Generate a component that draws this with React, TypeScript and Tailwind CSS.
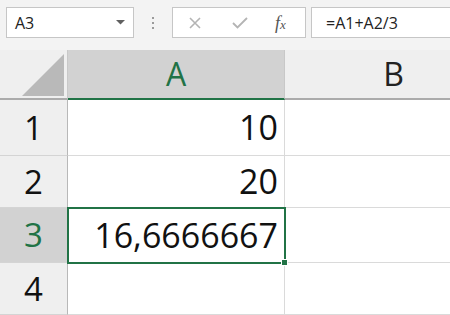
import React from "react"

const font = { fontFamily: '"Open Sans", "Noto Sans", sans-serif' }

const rows = [
    { n: "1", v: "10", h: "h-[56px]" },
    { n: "2", v: "20", h: "h-[52px]" },
    { n: "3", v: "16,6666667", h: "h-[55px]", sel: true },
    { n: "4", v: "", h: "h-[52px]" },
]

const FormulaBar: React.FC = () => {
    return (
        <div className="flex h-[50px] items-start gap-0 bg-[#f3f3f3] pt-[7px] pl-[6px]">
            {/* name box */}
            <div className="flex h-[31px] w-[128px] items-center justify-between border border-[#c6c6c6] bg-white pl-[8px] pr-[8px] text-[16px] text-[#222]">
                <span>A3</span>
                <svg width="9" height="5" viewBox="0 0 9 5">
                    <path d="M0 0 L9 0 L4.5 4.5 Z" fill="#606060" />
                </svg>
            </div>
            <div className="flex h-[31px] w-[38px] flex-col items-center justify-center gap-[3px]">
                <span className="block h-[2px] w-[2px] bg-[#9a9a9a]" />
                <span className="block h-[2px] w-[2px] bg-[#9a9a9a]" />
                <span className="block h-[2px] w-[2px] bg-[#9a9a9a]" />
            </div>
            {/* cancel / enter / fx */}
            <div className="flex h-[31px] w-[134px] items-center border border-[#c6c6c6] bg-white">
                <svg className="ml-[16px]" width="12" height="12" viewBox="0 0 12 12">
                    <path d="M1 1 L11 11 M11 1 L1 11" stroke="#b4b4b4" strokeWidth="1.6" />
                </svg>
                <svg className="ml-[31px]" width="16" height="12" viewBox="0 0 16 12">
                    <path d="M1 6 L5.5 10.5 L15 1" stroke="#b4b4b4" strokeWidth="1.8" fill="none" />
                </svg>
                <span className="ml-[27px] text-[18px] italic leading-none text-[#555]" style={{ fontFamily: '"Liberation Serif", serif' }}>
                    f<span className="text-[13px]">x</span>
                </span>
            </div>
            <div className="ml-[5px] flex h-[31px] flex-1 items-center border border-r-0 border-[#c6c6c6] bg-white pl-[14px] text-[16px] text-[#222]">
                =A1+A2/3
            </div>
        </div>
    )
}

const App: React.FC = () => {
    return (
        <div className="h-[315px] w-[450px] overflow-hidden bg-white" style={font}>
            <FormulaBar />
            <div className="grid grid-cols-[68px_217px_217px]">
                {/* header row */}
                <div className="flex h-[50px] items-end justify-end border-r border-b-2 border-r-[#c8c8c8] border-b-[#ababab] bg-[#efefef] pr-[3px] pb-[2px]">
                    <svg width="42" height="42" viewBox="0 0 42 42">
                        <path d="M0 42 L42 0 L42 42 Z" fill="#b9b9b9" />
                    </svg>
                </div>
                <div className="flex h-[50px] items-center justify-center border-r border-b-2 border-r-[#c8c8c8] border-b-[#217346] bg-[#d2d2d2] text-[32px] text-[#217346]">
                    A
                </div>
                <div className="flex h-[50px] items-center justify-center border-b-2 border-b-[#ababab] bg-[#efefef] text-[32px] text-[#222]">
                    B
                </div>
                {rows.map((r) => (
                    <React.Fragment key={r.n}>
                        <div
                            className={`flex ${r.h} items-center justify-center border-r border-b border-r-[#b8b8b8] border-b-[#d4d4d4] text-[33px] ${
                                r.sel ? "bg-[#d2d2d2] text-[#217346]" : "bg-[#efefef] text-[#111]"
                            }`}
                        >
                            {r.n}
                        </div>
                        <div
                            className={`relative flex ${r.h} items-center justify-end border-r border-b border-[#dadada] pr-[6px] text-[34px] text-[#111] ${
                                r.sel ? "outline-2 -outline-offset-1 outline-[#217346]" : ""
                            }`}
                        >
                            {r.v}
                            {r.sel && (
                                <span className="absolute right-[-4px] bottom-[-4px] z-10 h-[7px] w-[7px] border border-white bg-[#217346]" />
                            )}
                        </div>
                        <div className={`${r.h} border-b border-[#dadada]`} />
                    </React.Fragment>
                ))}
            </div>
        </div>
    )
}

export default App
